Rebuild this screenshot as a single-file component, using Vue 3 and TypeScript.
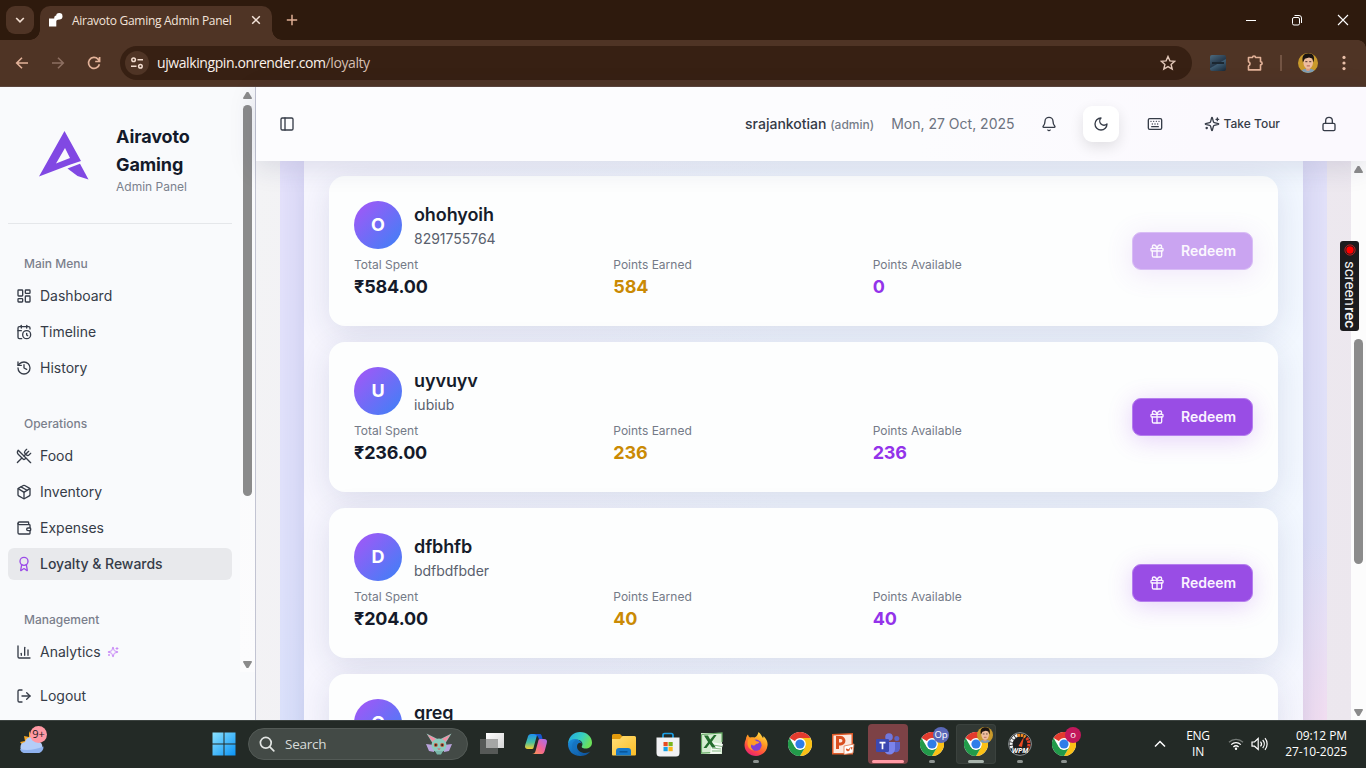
<script setup lang="ts">
interface NavItem {
  label: string
  icon: string
  active?: boolean
  spark?: boolean
}
interface NavGroup {
  title: string
  items: NavItem[]
}
interface Customer {
  name: string
  contact: string
  spent: string
  earned: string
  available: string
}

const icons: Record<string, string[]> = {
  dashboard: [
    'M4 3h5a1 1 0 0 1 1 1v7a1 1 0 0 1-1 1H4a1 1 0 0 1-1-1V4a1 1 0 0 1 1-1z',
    'M15 3h5a1 1 0 0 1 1 1v3a1 1 0 0 1-1 1h-5a1 1 0 0 1-1-1V4a1 1 0 0 1 1-1z',
    'M15 12h5a1 1 0 0 1 1 1v7a1 1 0 0 1-1 1h-5a1 1 0 0 1-1-1v-7a1 1 0 0 1 1-1z',
    'M4 16h5a1 1 0 0 1 1 1v3a1 1 0 0 1-1 1H4a1 1 0 0 1-1-1v-3a1 1 0 0 1 1-1z',
  ],
  timeline: [
    'M21 7.5V6a2 2 0 0 0-2-2H5a2 2 0 0 0-2 2v14a2 2 0 0 0 2 2h3.5',
    'M16 2v4', 'M8 2v4', 'M3 10h5', 'M17.5 17.5 16 16.3V14',
    'M22 16a6 6 0 1 1-12 0 6 6 0 0 1 12 0z',
  ],
  history: ['M3 12a9 9 0 1 0 9-9 9.75 9.75 0 0 0-6.74 2.74L3 8', 'M3 3v5h5', 'M12 7v5l4 2'],
  food: [
    'm16 2-2.3 2.3a3 3 0 0 0 0 4.2l1.8 1.8a3 3 0 0 0 4.2 0L22 8',
    'M15 15 3.3 3.3a4.2 4.2 0 0 0 0 6l7.3 7.3c.7.7 2 .7 2.8 0L15 15Zm0 0 7 7',
    'm2.1 21.8 6.4-6.3', 'm19 5-7 7',
  ],
  inventory: [
    'M11 21.73a2 2 0 0 0 2 0l7-4A2 2 0 0 0 21 16V8a2 2 0 0 0-1-1.73l-7-4a2 2 0 0 0-2 0l-7 4A2 2 0 0 0 3 8v8a2 2 0 0 0 1 1.73z',
    'M12 22V12', 'm3.3 7 7.703 4.734a2 2 0 0 0 1.994 0L20.7 7', 'm7.5 4.27 9 5.15',
  ],
  wallet: [
    'M19 7V4a1 1 0 0 0-1-1H5a2 2 0 0 0 0 4h15a1 1 0 0 1 1 1v4h-3a2 2 0 0 0 0 4h3a1 1 0 0 0 1-1v-2a1 1 0 0 0-1-1',
    'M3 5v14a2 2 0 0 0 2 2h15a1 1 0 0 0 1-1v-4',
  ],
  award: [
    'm15.477 12.89 1.515 8.526a.5.5 0 0 1-.81.47l-3.58-2.687a1 1 0 0 0-1.197 0l-3.586 2.686a.5.5 0 0 1-.81-.469l1.514-8.526',
    'M18 8A6 6 0 1 1 6 8a6 6 0 0 1 12 0z',
  ],
  chart: ['M3 3v16a2 2 0 0 0 2 2h16', 'M18 17V9', 'M13 17V5', 'M8 17v-3'],
  sparkles: [
    'M9.937 15.5A2 2 0 0 0 8.5 14.063l-6.135-1.582a.5.5 0 0 1 0-.962L8.5 9.936A2 2 0 0 0 9.937 8.5l1.582-6.135a.5.5 0 0 1 .963 0L14.063 8.5A2 2 0 0 0 15.5 9.937l6.135 1.581a.5.5 0 0 1 0 .964L15.5 14.063a2 2 0 0 0-1.437 1.437l-1.582 6.135a.5.5 0 0 1-.963 0z',
    'M20 3v4', 'M22 5h-4', 'M4 17v2', 'M5 18H3',
  ],
  logout: ['M9 21H5a2 2 0 0 1-2-2V5a2 2 0 0 1 2-2h4', 'm16 17 5-5-5-5', 'M21 12H9'],
  panel: ['M5 3h14a2 2 0 0 1 2 2v14a2 2 0 0 1-2 2H5a2 2 0 0 1-2-2V5a2 2 0 0 1 2-2z', 'M9 3v18'],
  bell: [
    'M10.268 21a2 2 0 0 0 3.464 0',
    'M3.262 15.326A1 1 0 0 0 4 17h16a1 1 0 0 0 .74-1.673C19.41 13.956 18 12.499 18 8A6 6 0 0 0 6 8c0 4.499-1.411 5.956-2.738 7.326',
  ],
  moon: ['M12 3a6 6 0 0 0 9 9 9 9 0 1 1-9-9Z'],
  keyboard: [
    'M4 4h16a2 2 0 0 1 2 2v12a2 2 0 0 1-2 2H4a2 2 0 0 1-2-2V6a2 2 0 0 1 2-2z',
    'M10 8h.01', 'M12 12h.01', 'M14 8h.01', 'M16 12h.01', 'M18 8h.01', 'M6 8h.01', 'M7 16h10', 'M8 12h.01',
  ],
  lock: ['M5 11h14a2 2 0 0 1 2 2v7a2 2 0 0 1-2 2H5a2 2 0 0 1-2-2v-7a2 2 0 0 1 2-2z', 'M7 11V7a5 5 0 0 1 10 0v4'],
  gift: [
    'M4 8h16a1 1 0 0 1 1 1v2a1 1 0 0 1-1 1H4a1 1 0 0 1-1-1V9a1 1 0 0 1 1-1z',
    'M12 8v13', 'M19 12v7a2 2 0 0 1-2 2H7a2 2 0 0 1-2-2v-7',
    'M7.5 8a2.5 2.5 0 0 1 0-5A4.8 8 0 0 1 12 8a4.8 8 0 0 1 4.5-5 2.5 2.5 0 0 1 0 5',
  ],
}

const groups: NavGroup[] = [
  {
    title: 'Main Menu',
    items: [
      { label: 'Dashboard', icon: 'dashboard' },
      { label: 'Timeline', icon: 'timeline' },
      { label: 'History', icon: 'history' },
    ],
  },
  {
    title: 'Operations',
    items: [
      { label: 'Food', icon: 'food' },
      { label: 'Inventory', icon: 'inventory' },
      { label: 'Expenses', icon: 'wallet' },
      { label: 'Loyalty & Rewards', icon: 'award', active: true },
    ],
  },
  { title: 'Management', items: [{ label: 'Analytics', icon: 'chart', spark: true }] },
]

const customers: Customer[] = [
  { name: 'ohohyoih', contact: '8291755764', spent: '₹584.00', earned: '584', available: '0' },
  { name: 'uyvuyv', contact: 'iubiub', spent: '₹236.00', earned: '236', available: '236' },
  { name: 'dfbhfb', contact: 'bdfbdfbder', spent: '₹204.00', earned: '40', available: '40' },
  { name: 'greg', contact: '', spent: '', earned: '', available: '' },
]

const chromeWindows = [
  { key: 'op', badge: 'Op', color: '#5a68b8', focused: false },
  { key: 'me', badge: '', color: '#c99a2b', focused: true },
]
</script>

<template>
  <div class="screen">
    <svg class="defs" width="0" height="0">
      <defs>
        <symbol id="chrome-logo" viewBox="0 0 24 24">
          <circle cx="12" cy="12" r="12" fill="#fff" />
          <path d="M12 12 1.600 6A12 12 0 0 1 22.400 6z" fill="#e33b2e" />
          <path d="M12 6h10.400A12 12 0 0 1 12 24l5.200-9z" fill="#fbc116" />
          <path d="M1.600 6 6.800 15 12 18l5-2.600L12 24A12 12 0 0 1 1.600 6z" fill="#229a4a" />
          <circle cx="12" cy="12" r="5.900" fill="#fff" />
          <circle cx="12" cy="12" r="4.600" fill="#2f7de8" />
        </symbol>
        <symbol id="face" viewBox="0 0 20 20">
          <path d="M2.500 20c.6-3.500 4-4.400 7.500-4.400s6.900.9 7.500 4.400z" fill="#7e9db5" />
          <path d="M8 13h4v4.200l-2 1-2-1z" fill="#d99c7e" />
          <ellipse cx="10.200" cy="9.500" rx="4.800" ry="6.300" fill="#eebd9f" />
          <path d="M4.900 9.500C3.400 3.200 5.900.3 10.500.3s6.600 3.200 5 9.200l-1.200-4-3.300-.9-4.200 1.200z" fill="#1a1412" />
          <path d="M7.300 8.700h2.100M11.200 8.700h2.100" stroke="#3a2520" stroke-width=".9" />
          <path d="M8.700 12.900h3.200" stroke="#a6544c" stroke-width=".9" />
        </symbol>
      </defs>
    </svg>

    <header class="titlebar">
      <div class="tab-search">
        <svg width="10" height="10" viewBox="0 0 10 10"><path d="m1.200 3 3.800 3.800L8.800 3" fill="none" stroke="#f0dccf" stroke-width="1.700" /></svg>
      </div>
      <div class="tab">
        <svg class="favicon" width="16" height="16" viewBox="0 0 16 16">
          <path d="M1 6.500h5.200c0-2 .8-2.800 2-2.900L12 7C9.500 7.500 8.300 8 8.300 9.500v5H1z" fill="#fff" />
          <circle cx="11.300" cy="4.300" r="3.200" fill="#fff" />
        </svg>
        <span class="tab-title">Airavoto Gaming Admin Panel</span>
        <svg width="10" height="10" viewBox="0 0 10 10"><path d="m1.200 1.200 7.600 7.600m0-7.600L1.200 8.800" stroke="#f5e4da" stroke-width="1.500" /></svg>
      </div>
      <svg class="new-tab" width="12" height="12" viewBox="0 0 12 12"><path d="M6 .8v10.400M.8 6h10.400" stroke="#dfae94" stroke-width="1.500" /></svg>
      <div class="window-buttons">
        <svg width="12" height="12" viewBox="0 0 12 12"><path d="M1 6.500h10" stroke="#fff" /></svg>
        <svg width="12" height="12" viewBox="0 0 12 12" fill="none" stroke="#fff"><rect x="1.500" y="3.500" width="7" height="7.500" rx="1.500" /><path d="M3.500 1.500H8a2.500 2.500 0 0 1 2.500 2.500v5" /></svg>
        <svg width="12" height="12" viewBox="0 0 12 12"><path d="m1 1 10 10M11 1 1 11" stroke="#fff" stroke-width="1.100" /></svg>
      </div>
    </header>

    <div class="toolbar">
      <svg class="tool" width="16" height="16" viewBox="0 0 16 16" fill="none" stroke="#e3b299" stroke-width="1.600"><path d="M14 8H3m5-5.300L2.700 8 8 13.300" /></svg>
      <svg class="tool" width="16" height="16" viewBox="0 0 16 16" fill="none" stroke="#8d6f61" stroke-width="1.600"><path d="M2 8h11M8 2.700 13.300 8 8 13.300" /></svg>
      <svg class="tool" width="16" height="16" viewBox="0 0 16 16" fill="none" stroke="#e3b299" stroke-width="1.700"><path d="M13.400 9.200A5.500 5.500 0 1 1 12 4.100L13.500 6M13.600 2v4.500H9.200" /></svg>
      <div class="omnibox">
        <span class="site-info">
          <svg width="14" height="14" viewBox="0 0 14 14" fill="none" stroke="#f3ddd0" stroke-width="1.500"><circle cx="3.600" cy="3.800" r="1.800" /><path d="M7.500 3.800H13M1 10.200h5.500" /><circle cx="10.400" cy="10.200" r="1.800" /></svg>
        </span>
        <span class="url">ujwalkingpin.onrender.com<span class="path">/loyalty</span></span>
        <svg width="16" height="16" viewBox="0 0 16 16" fill="none" stroke="#e3c8b9" stroke-width="1.400"><path d="m8 1.500 1.900 4.400 4.800.4-3.600 3.100 1.100 4.700L8 11.600l-4.200 2.500 1.100-4.700L1.300 6.300l4.800-.4z" /></svg>
      </div>
      <span class="ext"><i></i></span>
      <svg class="puzzle" width="18" height="18" viewBox="0 0 18 18" fill="none" stroke="#e3b299" stroke-width="1.600" stroke-linejoin="round"><path d="M2.500 3.500h4a1.500 1.500 0 0 1 3 0h5v4.200a1.600 1.600 0 0 1 0 3.200v5h-12v-4a2.200 2.200 0 0 0 0-4.200z" /></svg>
      <span class="tool-divider"></span>
      <span class="profile"><svg width="20" height="20"><use href="#face" /></svg></span>
      <svg class="kebab" width="4" height="16" viewBox="0 0 4 16" fill="#e9bfa8"><circle cx="2" cy="2.400" r="1.600" /><circle cx="2" cy="8" r="1.600" /><circle cx="2" cy="13.600" r="1.600" /></svg>
    </div>

    <div class="page">
      <aside class="sidebar">
        <div class="side-scroll">
          <nav class="side-content">
            <div class="brand">
              <svg class="brand-mark" width="50" height="52" viewBox="0 0 50 52">
                <path fill-rule="evenodd" fill="#8148e3" d="M25.500 1 42 31 31.500 34.500 0 46.500zM26 18 17 33.500 31 28z" />
                <path fill="#8148e3" d="m28.500 38.500 12.500-4.800L49.500 49.500 38.500 46z" />
              </svg>
              <div class="brand-text">
                <h1>Airavoto<br />Gaming</h1>
                <p>Admin Panel</p>
              </div>
            </div>
            <section v-for="g in groups" :key="g.title" class="group">
              <h2>{{ g.title }}</h2>
              <a v-for="i in g.items" :key="i.label" class="nav-item" :class="{ active: i.active }">
                <svg class="ic" viewBox="0 0 24 24"><path v-for="d in icons[i.icon]" :key="d" :d="d" /></svg>
                <span>{{ i.label }}</span>
                <svg v-if="i.spark" class="ic spark" viewBox="0 0 24 24"><path v-for="d in icons.sparkles" :key="d" :d="d" /></svg>
              </a>
            </section>
          </nav>
          <div class="scrollbar side-bar"><i class="up"></i><b></b><i class="down"></i></div>
        </div>
        <a class="nav-item logout">
          <svg class="ic" viewBox="0 0 24 24"><path v-for="d in icons.logout" :key="d" :d="d" /></svg>
          <span>Logout</span>
        </a>
      </aside>

      <main class="main">
        <div class="topbar">
          <svg class="ic" viewBox="0 0 24 24"><path v-for="d in icons.panel" :key="d" :d="d" /></svg>
          <div class="top-right">
            <span class="user">srajankotian <small>(admin)</small></span>
            <span class="date">Mon, 27 Oct, 2025</span>
            <button class="icon-btn bell"><svg class="ic" viewBox="0 0 24 24"><path v-for="d in icons.bell" :key="d" :d="d" /></svg></button>
            <button class="icon-btn raised"><svg class="ic" viewBox="0 0 24 24"><path v-for="d in icons.moon" :key="d" :d="d" /></svg></button>
            <button class="icon-btn keys"><svg class="ic" viewBox="0 0 24 24"><path v-for="d in icons.keyboard" :key="d" :d="d" /></svg></button>
            <button class="tour"><svg class="ic" viewBox="0 0 24 24"><path v-for="d in icons.sparkles" :key="d" :d="d" /></svg>Take Tour</button>
            <button class="icon-btn lock"><svg class="ic" viewBox="0 0 24 24"><path v-for="d in icons.lock" :key="d" :d="d" /></svg></button>
          </div>
        </div>
        <div class="body">
          <div class="viewport">
            <div class="backdrop">
              <div class="panel">
                <article v-for="c in customers" :key="c.name" class="card">
                  <div class="info">
                    <div class="person">
                      <span class="avatar">{{ c.name[0].toUpperCase() }}</span>
                      <div>
                        <h3>{{ c.name }}</h3>
                        <p>{{ c.contact }}</p>
                      </div>
                    </div>
                    <dl v-if="c.spent" class="stats">
                      <div><dt>Total Spent</dt><dd>{{ c.spent }}</dd></div>
                      <div><dt>Points Earned</dt><dd class="gold">{{ c.earned }}</dd></div>
                      <div><dt>Points Available</dt><dd class="violet">{{ c.available }}</dd></div>
                    </dl>
                  </div>
                  <button v-if="c.spent" class="redeem" :disabled="c.available === '0'">
                    <svg class="ic" viewBox="0 0 24 24"><path v-for="d in icons.gift" :key="d" :d="d" /></svg>
                    <span>Redeem</span>
                  </button>
                </article>
              </div>
            </div>
          </div>
          <div class="scrollbar main-bar"><i class="up"></i><b></b><i class="down"></i></div>
        </div>
      </main>
      <div class="recorder">
        <svg width="12" height="12" viewBox="0 0 12 12"><circle cx="6" cy="6" r="5.100" fill="none" stroke="#e52222" stroke-width=".8" /><circle cx="6" cy="6" r="3.700" fill="#f00" /></svg>
        <span>screen<b>rec</b></span>
      </div>
    </div>

    <footer class="taskbar">
      <div class="weather">
        <svg width="30" height="32" viewBox="0 0 30 32">
          <path d="m10 6 3 6 6 2-5 9-9-1-4-5 5-1-1-5 5 1z" fill="#f5a623" />
          <path d="M6.500 28a5.500 5.500 0 0 1-.5-10.900 6.500 6.500 0 0 1 12.500-.8A6 6 0 0 1 19 28z" fill="#b4cdf8" />
          <path d="M6 28a5.500 5.500 0 0 1-5-4c6 2 15 1 23.500-2.500A6 6 0 0 1 19 28z" fill="#8fb2ee" />
        </svg>
        <span>9+</span>
      </div>
      <svg class="start" width="24" height="24" viewBox="0 0 24 24">
        <defs><linearGradient id="win" x1="0" y1="0" x2="1" y2="1"><stop offset="0" stop-color="#8be2ff" /><stop offset="1" stop-color="#0a93f5" /></linearGradient></defs>
        <path fill="url(#win)" d="M.5.500h11v11H.5zM12.500.500h11v11h-11zM.5 12.500h11v11H.5zM12.500 12.500h11v11h-11z" />
      </svg>
      <div class="search">
        <svg width="16" height="16" viewBox="0 0 16 16" fill="none" stroke="#e2e5e3" stroke-width="1.700"><circle cx="6.800" cy="6.800" r="5.400" /><path d="m10.800 10.800 4 4" stroke-linecap="round" /></svg>
        <span>Search</span>
        <svg class="critter" width="28" height="22" viewBox="0 0 28 22">
          <path d="M9 12 1 11l3 7 5 1zm10 0 8-1-3 7-5 1z" fill="#b9a3dc" />
          <path d="M8 11 1.500.5 12.500 6zm12 0L26.500.5 15.500 6z" fill="#8fc9bd" />
          <path d="M8 9.500 2.500 1.500 11 6zm12 0 5.500-8L17 6z" fill="#f38ea5" />
          <ellipse cx="14" cy="12.500" rx="7.500" ry="7" fill="#8ccbbd" />
          <path d="M10 18h8l-2 3.500h-4z" fill="#78b5a8" />
          <circle cx="10.800" cy="12" r="2" fill="#c05a3d" /><circle cx="17.200" cy="12" r="2" fill="#c05a3d" />
          <circle cx="10.800" cy="12" r="1" fill="#30211f" /><circle cx="17.200" cy="12" r="1" fill="#30211f" />
          <path d="M12.200 15.500h3.600L14 17z" fill="#df5b69" />
        </svg>
      </div>
      <div class="apps">
        <div class="app"><svg width="24" height="24" viewBox="0 0 24 24"><defs><linearGradient id="tv" x1="0" y1="0" x2="1" y2="1"><stop stop-color="#fff" /><stop offset="1" stop-color="#d5d5d5" /></linearGradient></defs><path fill="#565957" d="M0 7h18v15H0z" /><path fill="url(#tv)" d="M6 1h18v15H6z" /><path fill="#a5a6a5" d="M6 7h12v9H6z" /></svg></div>
        <div class="app">
          <svg width="24" height="24" viewBox="0 0 24 24">
            <defs>
              <linearGradient id="cpa" x1="0" y1="0" x2="0" y2="1"><stop stop-color="#1d8ff0" /><stop offset=".55" stop-color="#45c0a0" /><stop offset="1" stop-color="#f4cf31" /></linearGradient>
              <linearGradient id="cpb" x1="1" y1="0" x2="0" y2="1"><stop stop-color="#a36ff0" /><stop offset=".5" stop-color="#f06398" /><stop offset="1" stop-color="#fa9a4a" /></linearGradient>
            </defs>
            <path fill="url(#cpb)" d="M16 7h4c2.500 0 3.500 1.500 2.800 4l-2 7.500C20 21.500 19 22 16.500 22H8c2 0 3-1 3.600-3.200L14 10c.5-2 .5-3 2-3z" />
            <path fill="url(#cpa)" d="M8 17H4c-2.500 0-3.500-1.500-2.800-4L3.500 6C4.200 3 5 2 7.500 2H16c-2 0-3 1-3.600 3.200L10 14c-.5 2-.5 3-2 3z" />
            <path fill="#1656d0" d="M8 2h8c1.500 0 2 2 2.500 5H15c-1-3-3-5-7-5z" />
          </svg>
        </div>
        <div class="app">
          <svg width="24" height="24" viewBox="0 0 24 24">
            <defs>
              <linearGradient id="ea" x1="0" y1="0" x2="1" y2=".4"><stop stop-color="#1fa5e8" /><stop offset=".6" stop-color="#38cfc0" /><stop offset="1" stop-color="#6be05a" /></linearGradient>
              <linearGradient id="eb" x1="0" y1="0" x2="1" y2="1"><stop stop-color="#1b8fe0" /><stop offset="1" stop-color="#0d4d95" /></linearGradient>
            </defs>
            <path fill="url(#ea)" d="M0 12C.5 4 6 0 12 0c7 0 12 5 12 10.500 0 4-3 6-6.500 6-3 0-4.500-1.200-3.500-2.500 1-1.500.5-5-3-6C7 7 2 8 0 12z" />
            <path fill="url(#eb)" d="M0 12C1 8 5 6.500 8.500 7.200c3.200.7 5.300 3 5.500 5C12.500 9.500 9 11 9 14.500c0 4 4 6.500 8 6.500 2.500 0 4-.8 5.300-1.500C20 22.500 16.500 24 12 24 5 24 0 19 0 12z" />
            <path fill="#1670bd" d="M8 8c-4 2-5.500 7-2 11.500 2 2.600 5 4.300 8 4.300C8 22 6.500 13 11 9.500z" opacity=".6" />
          </svg>
        </div>
        <div class="app"><svg width="24" height="24" viewBox="0 0 24 24"><defs><linearGradient id="fe" x1="0" y1="0" x2="1" y2="1"><stop stop-color="#ffde78" /><stop offset="1" stop-color="#fbbd26" /></linearGradient></defs><path fill="#e29a0c" d="M0 3.500A1.500 1.500 0 0 1 1.500 2H8l2.500 2.500V8H0z" /><path fill="url(#fe)" d="M0 7h8l2.500-3H22.500A1.500 1.500 0 0 1 24 5.500v17A1 1 0 0 1 23 23.500H1a1 1 0 0 1-1-1z" /><path fill="#1678c9" d="M4 23.500v-4.500a3 3 0 0 1 3-3h9a3 3 0 0 1 3 3v4.500z" /><path fill="#0a579b" d="M7.500 19h8v1.600h-8z" /></svg></div>
        <div class="app"><svg width="24" height="25" viewBox="0 0 24 25"><path d="M7 6V3.200C7 2 7.500 1.500 8.700 1.500h6.600c1.200 0 1.700.5 1.700 1.700V6" fill="none" stroke="#1b9fe5" stroke-width="1.700" /><path fill="#f1f2f4" d="M.5 5.500h23V21a3.500 3.500 0 0 1-3.500 3.500H4A3.500 3.500 0 0 1 .5 21z" /><path fill="#e64b20" d="M7.500 10h4.200v4.200H7.500z" /><path fill="#79b51c" d="M12.500 10h4.200v4.200h-4.200z" /><path fill="#159fe4" d="M7.500 15h4.200v4.200H7.500z" /><path fill="#fbb51b" d="M12.500 15h4.200v4.200h-4.200z" /></svg></div>
        <div class="app"><svg width="24" height="24" viewBox="0 0 24 24"><path fill="#d6edd2" d="M1 1h21v21H1z" /><path fill="none" stroke="#65a964" stroke-width="1.200" d="M1.500 2.500 22 1v9M1.500 2.500V21l11-.5" /><path fill="#f5faf4" d="m12 10 11 2-2.500 9.500L10 22z" /><path stroke="#6aa969" stroke-width=".8" d="m13 13 9 1.500M12 16l9 1M12 19h9" /><path fill="#236c2d" d="M4 3.500h4l2.200 4L14 3h2.600l-4.800 6.700 4 5.800h-3.800l-2.300-3.700L6.500 16h-3l4.600-6z" /></svg></div>
        <div class="app">
          <svg width="24" height="24" viewBox="0 0 24 24"><defs><linearGradient id="ff" x1=".8" y1="0" x2=".3" y2="1"><stop stop-color="#ffe34b" /><stop offset=".4" stop-color="#ff9b22" /><stop offset=".75" stop-color="#ff4a42" /><stop offset="1" stop-color="#e62277" /></linearGradient></defs><path fill="url(#ff)" d="M2 7c0-2 1-3.500 2-4.500.3 1.500 1 2.500 2 3C7.500 5 9 5 10.500 5.500c2-.5 3.500-3 4-5.500 2.500 2 3 4 4.500 6 .5-.5.500-1.500.5-2C22.500 7 24 10 23.500 13.500 23 19.500 18 24 12 24S.5 19.500.5 13C.5 11 1 9 2 7z" /><circle cx="12" cy="13.200" r="5.600" fill="#7d3fd6" /><path fill="#ff9d25" d="M4 7.500c3-2 6.500-1 8 1.500l3.500 1c-1 2-3.500 1.500-4 2.500-.5 1.200-3 1.500-3.500 0C6 13 7 17 10 18.500c-4-.2-6.500-3.500-6.500-7z" /></svg>
          <i class="dot"></i>
        </div>
        <div class="app"><svg width="24" height="24"><use href="#chrome-logo" /></svg></div>
        <div class="app"><svg width="24" height="24" viewBox="0 0 24 24"><path fill="#e05a28" d="M0 2 21 1v21.500H0z" /><path fill="#fbe8df" d="M1.500 3.500 19.500 2.500v18.500H1.500z" /><path fill="none" stroke="#d94e1f" stroke-width="3" d="M5.500 17V5.500h3.200a3.200 3.200 0 0 1 0 6.500H5.500" /><path fill="#fff" stroke="#e0794e" stroke-width=".8" d="m12 14 10-2-1 9-9 1.500z" /><path fill="#e05a28" d="M14 16.500a2 2 0 1 0 3-1v1.800zM18 15.500l2.500-.5-.5 3z" /></svg></div>
        <div class="app alert">
          <svg width="24" height="22" viewBox="0 0 24 22"><circle cx="13" cy="4" r="3.800" fill="#7077dc" /><circle cx="20.800" cy="5.500" r="2.500" fill="#5d63c6" /><path fill="#5a61c8" d="M17 9h7v6.500a4.500 4.500 0 0 1-7 3z" /><path fill="#7b83eb" d="M8 9h11v7a5.500 5.500 0 0 1-11 0z" /><rect y="6" width="13" height="13" rx="1.300" fill="#3c48b0" /><path d="M3.500 9.600h6M6.500 9.600v6.600" stroke="#fff" stroke-width="1.700" /></svg>
          <i class="dot wide"></i>
        </div>
        <div v-for="w in chromeWindows" :key="w.key" class="app" :class="{ focused: w.focused }">
          <svg width="24" height="24"><use href="#chrome-logo" /></svg>
          <span class="badge" :style="{ background: w.color }"><svg v-if="w.focused" width="16" height="16"><use href="#face" /></svg>{{ w.badge }}</span>
          <i class="dot" :class="{ mid: w.focused }"></i>
        </div>
        <div class="app">
          <svg width="24" height="24" viewBox="0 0 24 24"><circle cx="12" cy="12" r="11.400" fill="#1c1d1e" stroke="#8e9496" /><path d="M4 16A9 9 0 0 1 9.500 3.500" fill="none" stroke="#f0f2f3" stroke-width="3" stroke-dasharray="2.500 .7" /><path d="M9.500 3.500A9 9 0 0 1 17.500 5" fill="none" stroke="#f28b22" stroke-width="3" stroke-dasharray="2.500 .7" /><path d="M18.500 6A9 9 0 0 1 20 16" fill="none" stroke="#e23d25" stroke-width="3" stroke-dasharray="2.500 .7" /><path d="m16 4.500-2 10.500-3.500-1z" fill="#ee4b22" /><text x="12" y="20.500" text-anchor="middle" class="wpm">WPM</text></svg>
          <i class="dot"></i>
        </div>
        <div class="app">
          <svg width="24" height="24"><use href="#chrome-logo" /></svg>
          <span class="badge pink">o</span>
          <i class="dot"></i>
        </div>
      </div>
      <div class="tray">
        <svg class="chev" width="12" height="8" viewBox="0 0 12 8" fill="none" stroke="#fff" stroke-width="1.500"><path d="m1 6.500 5-5 5 5" /></svg>
        <div class="lang"><div>ENG</div><div>IN</div></div>
        <svg class="wifi" width="16" height="14" viewBox="0 0 16 14" fill="none" stroke="#fff" stroke-width="1.300"><path d="M1 5.200a10 10 0 0 1 14 0" stroke="#747a77" /><path d="M3.200 7.600a7 7 0 0 1 9.600 0M5.400 10a3.800 3.800 0 0 1 5.200 0" /><circle cx="8" cy="11.700" r="1.200" fill="#fff" stroke="none" /></svg>
        <svg class="volume" width="18" height="14" viewBox="0 0 18 14" fill="none" stroke="#fff" stroke-width="1.200"><path d="M1 5v4.200h2.500L7.200 12.500v-11L3.500 5zM9.500 4.700a3.500 3.500 0 0 1 0 4.700M11.700 3a6 6 0 0 1 0 8M14 1.200a9 9 0 0 1 0 11.600" /></svg>
        <div class="clock"><div>09:12 PM</div><div>27-10-2025</div></div>
      </div>
    </footer>
  </div>
</template>

<style>
html,
body {
  margin: 0;
  overflow: hidden;
}
</style>

<style scoped>
* {
  box-sizing: border-box;
  margin: 0;
}
.screen {
  width: 1366px;
  height: 768px;
  display: flex;
  flex-direction: column;
  overflow: hidden;
  font-family: Inter, 'Liberation Sans', sans-serif;
  color: #363c48;
}
.defs {
  position: absolute;
}
svg {
  display: block;
  flex: none;
}
button {
  border: 0;
  background: none;
  padding: 0;
  font: inherit;
  color: inherit;
}
.ic {
  width: 16px;
  height: 16px;
  fill: none;
  stroke: currentColor;
  stroke-width: 2;
  stroke-linecap: round;
  stroke-linejoin: round;
}

/* Browser frame */
.titlebar {
  height: 40px;
  flex: none;
  display: flex;
  align-items: center;
  background: #2e1a0d;
  padding-left: 6px;
  font-family: 'Open Sans', 'Noto Sans', sans-serif;
}
.tab-search {
  width: 28px;
  height: 28px;
  border-radius: 9px;
  background: #4f3425;
  display: grid;
  place-items: center;
}
.tab {
  position: relative;
  align-self: flex-end;
  width: 232px;
  height: 34px;
  margin-left: 6px;
  padding: 0 11px 6px 8px;
  display: flex;
  align-items: center;
  background: #4f3425;
  border-radius: 10px 10px 0 0;
}
.tab::before,
.tab::after {
  content: '';
  position: absolute;
  bottom: 0;
  width: 10px;
  height: 10px;
}
.tab::before {
  left: -10px;
  background: radial-gradient(circle at 0 0, transparent 9.500px, #4f3425 10px);
}
.tab::after {
  right: -10px;
  background: radial-gradient(circle at 100% 0, transparent 9.500px, #4f3425 10px);
}
.tab-title {
  margin-left: 8px;
  flex: 1;
  color: #f3e3d9;
  font-size: 12px;
  line-height: 16px;
  padding-top: 1px;
  letter-spacing: -0.280px;
  white-space: nowrap;
}
.new-tab {
  margin-left: 14px;
}
.window-buttons {
  margin-left: auto;
  display: flex;
  gap: 34px;
  padding-right: 17px;
}
.toolbar {
  height: 47px;
  flex: none;
  display: flex;
  align-items: center;
  padding: 0 20px 1px 14px;
  background:
    radial-gradient(circle at 0 100%, #4f3425 7.500px, #2e1a0d 8px) right top / 8px 8px no-repeat,
    #4f3425;
  border-bottom: 1px solid #5b453c;
  font-family: 'Open Sans', 'Noto Sans', sans-serif;
}
.tool {
  margin-right: 20px;
}
.omnibox {
  width: 1072px;
  height: 34px;
  margin-left: -2px;
  padding: 0 16px 0 5px;
  border-radius: 17px;
  background: #372013;
  display: flex;
  align-items: center;
}
.site-info {
  width: 24px;
  height: 24px;
  border-radius: 50%;
  background: #4f3425;
  display: grid;
  place-items: center;
}
.url {
  margin-left: 8px;
  flex: 1;
  font-size: 14px;
  letter-spacing: -0.410px;
  color: #fbf1ea;
}
.path {
  color: #d5beb1;
}
.ext {
  width: 16px;
  height: 16px;
  margin-left: 18px;
  border-radius: 2px;
  background: linear-gradient(150deg, #4d6b80, #26384a 50%, #3e5c72 55%, #182735);
  display: grid;
  place-items: center;
}
.ext i {
  width: 12px;
  height: 2px;
  background: #1b2731;
}
.puzzle {
  margin-left: 20px;
}
.tool-divider {
  width: 2px;
  height: 16px;
  margin-left: 16px;
  background: #735443;
}
.profile {
  width: 20px;
  height: 20px;
  margin-left: 16px;
  border-radius: 50%;
  overflow: hidden;
  background: #c99a2b;
}
.kebab {
  margin-left: auto;
}

/* Application */
.page {
  position: relative;
  flex: 1;
  min-height: 0;
  display: flex;
}
.sidebar {
  width: 256px;
  flex: none;
  display: flex;
  flex-direction: column;
  background: #f9fafc;
  border-right: 1px solid #c2c4d2;
}
.side-scroll {
  height: 585px;
  display: flex;
}
.side-content {
  width: 240px;
  padding: 0 8px;
}
.brand {
  height: 137px;
  display: flex;
  align-items: center;
  padding: 7px 0 0 31px;
  border-bottom: 1px solid #e5e7ea;
}
.brand-mark {
  margin: -6px 0 0;
}
.brand-text {
  margin-left: 27px;
}
h1 {
  font-size: 18px;
  line-height: 28px;
  font-weight: 700;
  letter-spacing: -0.100px;
  color: #141a2a;
}
.brand-text p {
  font-size: 12px;
  line-height: 16px;
  color: #7b818d;
}
.group {
  display: flex;
  flex-direction: column;
  gap: 4px;
  padding-top: 24px;
}
h2 {
  height: 32px;
  margin-bottom: -4px;
  padding-left: 16px;
  font-size: 12px;
  line-height: 32px;
  font-weight: 500;
  color: #7b7f8c;
}
.nav-item {
  height: 32px;
  padding-left: 8px;
  border-radius: 6px;
  display: flex;
  align-items: center;
  gap: 8px;
  font-size: 14px;
  line-height: 20px;
}
.nav-item.active {
  background: #e8e9ec;
}
.nav-item.active span {
  font-weight: 500;
  letter-spacing: -0.040px;
}
.nav-item.active .ic {
  color: #9b4be8;
}
.nav-item .spark {
  width: 12px;
  height: 12px;
  color: #c98bf7;
  margin-left: -2px;
}
.logout {
  margin: 8px;
}
.scrollbar {
  width: 15px;
  display: flex;
  flex-direction: column;
  align-items: center;
  background: #fcfcfc;
}
.scrollbar i {
  width: 9px;
  height: 7px;
  background: #8b8b8b;
}
.scrollbar .up {
  clip-path: polygon(40% 0, 60% 0, 100% 85%, 95% 100%, 5% 100%, 0 85%);
}
.scrollbar .down {
  clip-path: polygon(5% 0, 95% 0, 100% 15%, 60% 100%, 40% 100%, 0 15%);
  margin-top: auto;
}
.scrollbar b {
  width: 9px;
  border-radius: 5px;
  background: #8b8b8b;
}
.side-bar {
  padding: 5px 0 4px;
  background: linear-gradient(#f8f9fb, #fcfcfd);
}
.side-bar b {
  height: 391px;
  margin-top: 6px;
}
.main {
  flex: 1;
  min-width: 0;
  display: flex;
  flex-direction: column;
}
.topbar {
  position: relative;
  z-index: 1;
  height: 74px;
  flex: none;
  display: flex;
  align-items: center;
  justify-content: space-between;
  padding: 0 29px 0 23px;
  background: linear-gradient(100deg, #fcfcfe 60%, #fbf9fe 85%);
  box-shadow: 0 6px 28px rgba(31, 38, 90, 0.130);
}
.top-right {
  display: flex;
  align-items: center;
  line-height: 20px;
}
.user {
  font-size: 14px;
  font-weight: 500;
  color: #343a46;
}
.user small {
  font-size: 12px;
  font-weight: 500;
  color: #767c89;
}
.date {
  margin-left: 17px;
  font-size: 14px;
  color: #6d7380;
}
.icon-btn {
  width: 36px;
  height: 36px;
  display: grid;
  place-items: center;
  border-radius: 9px;
}
.bell {
  margin-left: 16px;
}
.raised {
  margin-left: 16px;
  background: #fff;
  box-shadow: 0 5px 14px rgba(0, 0, 0, 0.110);
}
.keys {
  margin-left: 18px;
}
.tour {
  margin-left: 31px;
  display: flex;
  align-items: center;
  gap: 4px;
  font-size: 12px;
  font-weight: 500;
}
.lock {
  margin-left: 31px;
  margin-right: -10px;
}
.body {
  flex: 1;
  min-height: 0;
  display: flex;
}
.viewport {
  flex: 1;
  padding: 0 24px;
  overflow: hidden;
  background: linear-gradient(100deg, #f3f3f5, #f0edf2 40%, #ece7ee);
}
.backdrop {
  height: 700px;
  padding: 0 24px;
  overflow: hidden;
  background: radial-gradient(circle at 100% 80%, #f4e0f2, rgba(244, 224, 242, 0) 180px), linear-gradient(90deg, rgba(229, 226, 250, 0), rgba(229, 227, 249, 0.700)), linear-gradient(165deg, #e6e3fc, #e1e3fc 40%, #d7e3fb 80%);
}
.panel {
  height: 100%;
  padding: 15px 25px 0;
  display: flex;
  flex-direction: column;
  gap: 16px;
  background: radial-gradient(circle at 100% 100%, #fcf7fd, rgba(252, 247, 253, 0) 260px), linear-gradient(90deg, #f7f6fe, rgba(243, 248, 255, 0) 50%), linear-gradient(170deg, #f1f7ff, #f3f8ff 50%, #f1f6ff);
  box-shadow: 0 0 32px rgba(31, 38, 135, 0.150);
}
.card {
  height: 150px;
  flex: none;
  padding: 25px;
  display: flex;
  align-items: center;
  gap: 16px;
  border-radius: 16px;
  background: #fdfefe;
  box-shadow: 0 8px 32px rgba(31, 38, 105, 0.120);
}
.info {
  flex: 1;
  align-self: flex-start;
}
.person {
  display: flex;
  gap: 12px;
}
.avatar {
  width: 48px;
  height: 48px;
  border-radius: 50%;
  background: linear-gradient(135deg, #a855f7, #3b82f6);
  color: #fff;
  font-size: 18px;
  line-height: 28px;
  font-weight: 700;
  display: grid;
  place-items: center;
}
h3 {
  font-size: 18px;
  line-height: 28px;
  font-weight: 600;
  letter-spacing: -0.100px;
  color: #161c2b;
}
.person p {
  font-size: 14px;
  line-height: 20px;
  letter-spacing: -0.020px;
  color: #59606d;
}
.stats {
  display: grid;
  grid-template-columns: repeat(3, 1fr);
  gap: 16px;
  margin-top: 8px;
}
dt {
  font-size: 12px;
  line-height: 16px;
  color: #747a87;
}
dd {
  font-size: 18px;
  line-height: 28px;
  font-weight: 700;
  letter-spacing: -0.150px;
  color: #141a2a;
}
.gold {
  color: #ca8a04;
}
.violet {
  color: #9333ea;
}
.redeem {
  width: 121px;
  height: 38px;
  padding-left: 16px;
  display: flex;
  align-items: center;
  gap: 16px;
  border: 1px solid #b57eee;
  border-radius: 9px;
  background: #994de5;
  color: #faf3ff;
  font-size: 14px;
  line-height: 20px;
  font-weight: 600;
  box-shadow: 0 4px 24px rgba(147, 51, 234, 0.220);
}
.redeem:disabled {
  opacity: 0.500;
}
.main-bar {
  padding: 5px 0 4px;
}
.main-bar b {
  height: 225px;
  margin-top: 166px;
}
.recorder {
  position: absolute;
  left: 1340px;
  top: 154px;
  z-index: 2;
  width: 19px;
  height: 90px;
  padding: 3px 0 0;
  border-radius: 3px;
  background: #1c1c1e;
  color: #f3f3f3;
  display: flex;
  flex-direction: column;
  align-items: center;
  gap: 5px;
}
.recorder span {
  writing-mode: vertical-rl;
  font: 15px/19px Roboto, sans-serif;
  white-space: nowrap;
}
.recorder b {
  font-weight: 500;
  margin-top: 1px;
}

/* Taskbar */
.taskbar {
  position: relative;
  height: 48px;
  flex: none;
  display: flex;
  align-items: center;
  background: #232a26;
  border-top: 1px solid #3c4340;
  padding-bottom: 1px;
  color: #fff;
  font-family: 'Open Sans', 'Noto Sans', sans-serif;
}
.weather {
  position: relative;
  width: 30px;
  margin: -7px 0 0 19px;
}
.weather span {
  position: absolute;
  left: 11px;
  top: 1px;
  width: 17px;
  height: 17px;
  border-radius: 50%;
  background: #ff99a4;
  color: #1b1b1b;
  font-size: 11px;
  line-height: 16px;
  text-align: center;
}
.start {
  margin-left: 162.500px;
}
.search {
  width: 220px;
  height: 32px;
  margin-left: 12.500px;
  padding: 0 14px 0 10px;
  border-radius: 16px;
  border: 1px solid #535a56;
  background: #434a46;
  display: flex;
  align-items: center;
  color: #d8dbd9;
  font-size: 13.500px;
}
.search span {
  margin-left: 10px;
  flex: 1;
  letter-spacing: -0.250px;
}
.apps {
  display: flex;
  gap: 4px;
  margin-left: 4px;
}
.app {
  position: relative;
  width: 40px;
  height: 40px;
  border-radius: 4px;
  display: grid;
  place-items: center;
}
.alert {
  background: #7d4246;
}
.focused {
  background: #323935;
  box-shadow: inset 0 0 0 1px #3b423e;
}
.dot {
  position: absolute;
  bottom: 1px;
  left: 17px;
  width: 6px;
  height: 3px;
  border-radius: 2px;
  background: #8d9390;
}
.dot.mid {
  left: 12px;
  width: 16px;
  background: #a9b5ad;
}
.dot.wide {
  left: 4px;
  width: 32px;
  background: #ff99a4;
}
.badge {
  position: absolute;
  left: 21px;
  top: 3px;
  width: 16px;
  height: 16px;
  border-radius: 50%;
  overflow: hidden;
  color: #fff;
  font-size: 9.500px;
  line-height: 15px;
  text-align: center;
}
.pink {
  background: #c2185b;
}
.wpm {
  font: italic 700 7px 'Open Sans', sans-serif;
  fill: #fff;
}
.tray {
  margin-left: auto;
  padding-right: 19px;
  display: flex;
  align-items: center;
  font-size: 12px;
  line-height: 16px;
}
.lang {
  width: 30px;
  margin-left: 17px;
  text-align: center;
  letter-spacing: -0.300px;
}
.wifi {
  margin-left: 15px;
}
.volume {
  margin-left: 7px;
}
.clock {
  width: 70px;
  margin-left: 8px;
  text-align: right;
  letter-spacing: -0.080px;
  white-space: nowrap;
}
</style>
